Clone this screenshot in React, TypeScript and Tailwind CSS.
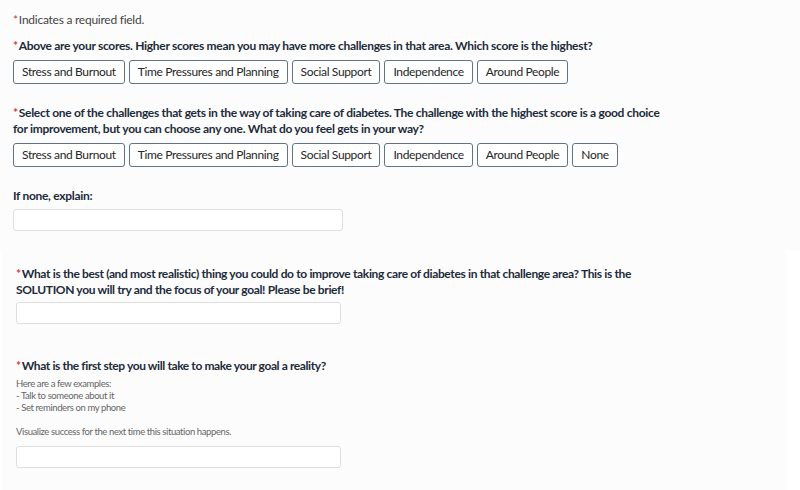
import { useState } from "react";

const scoreOptions = [
    "Stress and Burnout",
    "Time Pressures and Planning",
    "Social Support",
    "Independence",
    "Around People",
];

const Star = () => <span className="text-[#cf3a45] mr-[1px]">*</span>;

type ChoiceProps = {
    options: string[];
};

const ChoiceRow = (props: ChoiceProps) => {
    const [selected, setSelected] = useState<string | null>(null);
    return (
        <div className="flex flex-wrap gap-[4px] mt-[6px]">
            {props.options.map((opt) => (
                <button
                    key={opt}
                    onClick={() => setSelected(opt)}
                    className={
                        "h-[24px] px-[8px] rounded-[3px] border border-[#627385] text-[12px] tracking-[-0.35px] leading-none text-[#262626] " +
                        (selected === opt ? "bg-[#e6eef6]" : "bg-white")
                    }
                >
                    {opt}
                </button>
            ))}
        </div>
    );
};

type BoxProps = {
    wide?: boolean;
};

const TextBox = (props: BoxProps) => (
    <input
        className={
            "block h-[22px] bg-white border border-[#dedede] rounded-[3px] px-2 text-[13px] outline-none " +
            (props.wide ? "w-[330px]" : "w-[325px]")
        }
    />
);

const App = () => {
    return (
        <div className="w-[800px] h-[490px] overflow-hidden bg-white text-[#1c2b3a]" style={{ fontFamily: "Lato, 'Open Sans', sans-serif" }}>
            <div className="bg-[#fcfcfc] h-[250px] pl-[13px] pt-[11px]">
                <div className="text-[12px] tracking-[-0.25px] text-[#444] leading-[17px]">
                    <Star />Indicates a required field.
                </div>

                <div className="mt-[10px]">
                    <div className="text-[12px] tracking-[-0.3px] font-bold leading-[16px]">
                        <Star />Above are your scores. Higher scores mean you may have more challenges in that area. Which score is the highest?
                    </div>
                    <ChoiceRow options={scoreOptions} />
                </div>

                <div className="mt-[21px]">
                    <div className="text-[12px] tracking-[-0.3px] font-bold leading-[16px]">
                        <Star />Select one of the challenges that gets in the way of taking care of diabetes. The challenge with the highest score is a good choice
                        <br />
                        for improvement, but you can choose any one. What do you feel gets in your way?
                    </div>
                    <ChoiceRow options={[...scoreOptions, "None"]} />
                </div>

                <div className="mt-[21px]">
                    <div className="text-[12px] tracking-[-0.3px] font-bold leading-[16px] mb-[5px]">If none, explain:</div>
                    <TextBox wide />
                </div>
            </div>

            <div className="ml-[2px] w-[784px] h-[240px] bg-[#fcfcfc] pl-[14px] pt-[16px]">
                <div className="text-[12px] tracking-[-0.35px] font-bold leading-[16px]">
                    <Star />What is the best (and most realistic) thing you could do to improve taking care of diabetes in that challenge area? This is the
                    <br />
                    SOLUTION you will try and the focus of your goal! Please be brief!
                </div>
                <div className="mt-[4px]">
                    <TextBox />
                </div>

                <div className="mt-[34px] text-[12px] tracking-[-0.4px] font-bold leading-[16px]">
                    <Star />What is the first step you will take to make your goal a reality?
                </div>
                <div className="mt-[4px] text-[9.5px] tracking-[-0.4px] leading-[12px] text-[#666]">
                    <div>Here are a few examples:</div>
                    <div>- Talk to someone about it</div>
                    <div>- Set reminders on my phone</div>
                    <div className="h-[12px]" />
                    <div>Visualize success for the next time this situation happens.</div>
                </div>
                <div className="mt-[8px]">
                    <TextBox />
                </div>
            </div>
        </div>
    );
};

export default App;
